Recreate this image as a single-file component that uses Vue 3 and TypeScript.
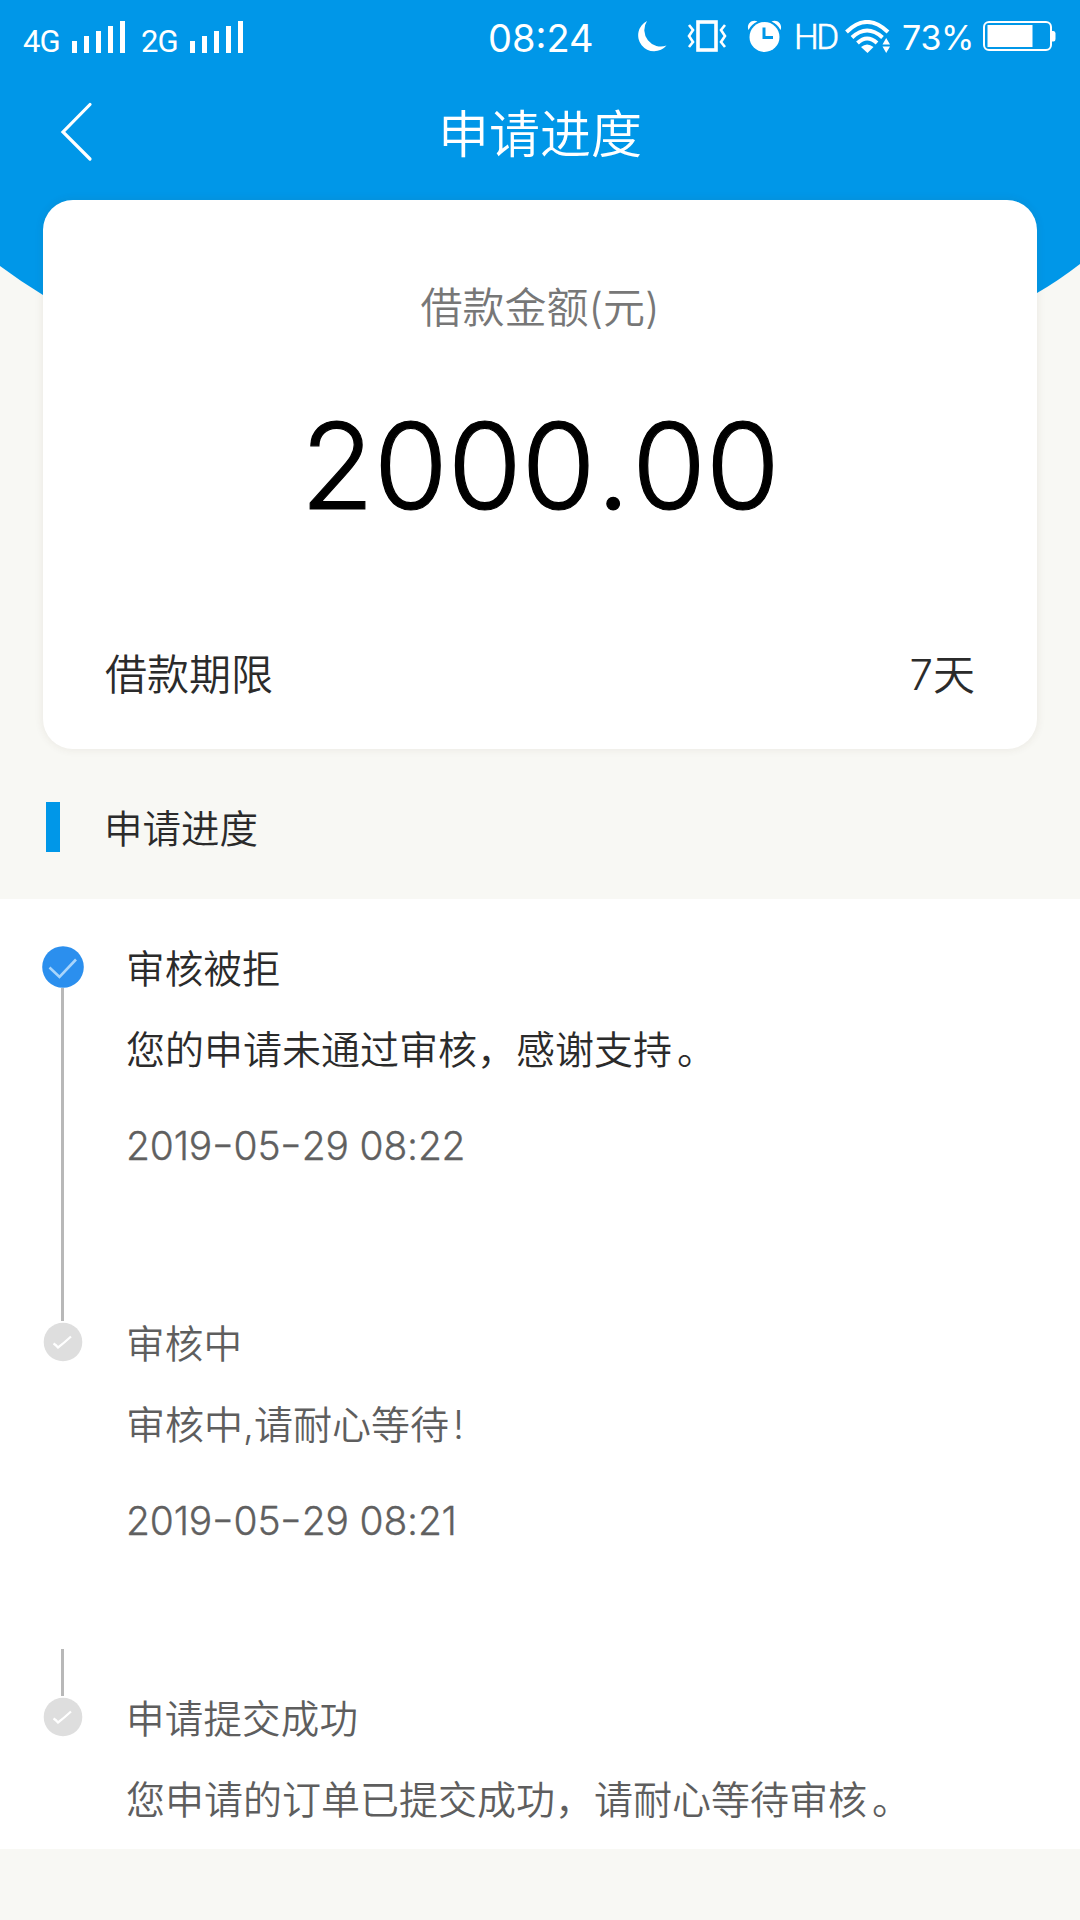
<script setup lang="ts">
interface Step {
  title: string
  text: string
  time?: string
  active: boolean
  lineAbove: boolean
  lineBelow: boolean
}

const signals: string[] = ['4G', '2G']
const bars: number[] = [12, 17, 22, 27, 32]

const steps: Step[] = [
  {
    title: '审核被拒',
    text: '您的申请未通过审核，感谢支持。',
    time: '2019-05-29 08:22',
    active: true,
    lineAbove: false,
    lineBelow: true,
  },
  {
    title: '审核中',
    text: '审核中,请耐心等待!',
    time: '2019-05-29 08:21',
    active: false,
    lineAbove: true,
    lineBelow: false,
  },
  {
    title: '申请提交成功',
    text: '您申请的订单已提交成功，请耐心等待审核。',
    active: false,
    lineAbove: true,
    lineBelow: false,
  },
]

// Splits a string so that its separators and end marks can be spaced on their own
const parts = (value: string): string[] => value.split(/(-|。|!)/).filter((p) => p !== '')
const markClass = (part: string): string =>
  part === '-' ? 'dash' : part === '。' ? 'stop' : part === '!' ? 'bang' : ''
</script>

<template>
  <div class="page">
    <svg class="backdrop" width="1080" height="400" viewBox="0 0 1080 400">
      <path d="M0 0H1080V264Q1058 281 1037 293Q540 560 43 295Q20 281 0 266Z" fill="#0097e8" />
    </svg>

    <header class="status">
      <div v-for="s in signals" :key="s" class="signal">
        <span class="net">{{ s }}</span>
        <span class="bars">
          <i v-for="h in bars" :key="h" :style="{ height: h + 'px' }"></i>
        </span>
      </div>
      <span class="clock">08:24</span>
      <svg class="moon" width="31" height="32" viewBox="0 0 31 32">
        <path d="M11 0A16 16 0 1 0 30.500 24.500A16.500 16.500 0 0 1 11 0Z" fill="#fff" />
      </svg>
      <svg class="vibrate" width="40" height="32" viewBox="0 0 40 32" fill="none" stroke="#fff">
        <rect x="11" y="2" width="18" height="28" stroke-width="3.600" />
        <path d="M2 5L6 10L2 16L6 22L2 27M38 5L34 10L38 16L34 22L38 27" stroke-width="2.600" />
      </svg>
      <svg class="alarm" width="35" height="32" viewBox="0 0 35 32">
        <circle cx="17.500" cy="17" r="15" fill="#fff" />
        <path d="M1.500 10A17.500 17.500 0 0 1 10.500 1.500C5 -1.500 -1 4 1.500 10ZM33.500 10A17.500 17.500 0 0 0 24.500 1.500C30 -1.500 36 4 33.500 10Z" fill="#fff" />
        <path d="M17 7.500V17.500H26" fill="none" stroke="#0097e8" stroke-width="3" />
      </svg>
      <span class="hd">HD</span>
      <svg class="wifi" width="46" height="33" viewBox="0 0 46 33">
        <g fill="none" stroke="#fff" stroke-width="4">
          <path d="M1.500 12Q22 -8 43 12" />
          <path d="M7 17.500Q22 3.500 37.500 17.500" />
          <path d="M12.500 23Q22 14 32 23" />
        </g>
        <path d="M16 27Q22 22 28.500 27L22.500 33Z" fill="#fff" />
        <path d="M37.500 24.500L41.200 18L45 24.500ZM37.500 26.500L41.200 33L45 26.500Z" fill="#fff" />
      </svg>
      <span class="percent">73%</span>
      <svg class="battery" width="73" height="31" viewBox="0 0 73 31">
        <rect x="1" y="1" width="67" height="28" rx="5" fill="none" stroke="#fff" stroke-width="2" />
        <rect x="4.500" y="4" width="45" height="22" fill="#fff" />
        <path d="M69 10H70.500Q72.500 10 72.500 12.500V18Q72.500 20.500 70.500 20.500H69Z" fill="#fff" />
      </svg>
    </header>

    <nav class="nav">
      <svg class="back" width="34" height="60" viewBox="0 0 34 60">
        <path d="M30 2.500L3 30L30 57" fill="none" stroke="#fff" stroke-width="3.200" stroke-linecap="round" />
      </svg>
      <h1>申请进度</h1>
    </nav>

    <section class="card">
      <p class="label">借款金额(元)</p>
      <p class="amount">2000<span class="point">.</span>00</p>
      <div class="term">
        <span>借款期限</span>
        <span>7天</span>
      </div>
    </section>

    <h2 class="heading"><span>申请进度</span></h2>

    <ol class="timeline">
      <li v-for="step in steps" :key="step.title" class="step" :class="{ active: step.active }">
        <div class="rail">
          <span class="line above" :class="{ shown: step.lineAbove }"></span>
          <svg class="dot" width="42" height="42" viewBox="0 0 42 42">
            <template v-if="step.active">
              <circle cx="21" cy="21" r="20.800" fill="#2b8fee" />
              <path d="M7.500 21.500L17.500 31L34 13.500" fill="none" stroke="#a9d5fb" stroke-width="2.600" />
            </template>
            <template v-else>
              <circle cx="21" cy="21" r="19.300" fill="#dedede" />
              <path d="M11.500 22.500Q14 24 16 26.500Q22 22 29 15.500" fill="none" stroke="#fff" stroke-width="2.200" />
            </template>
          </svg>
          <span class="line below" :class="{ shown: step.lineBelow }"></span>
        </div>
        <div class="body">
          <h3>{{ step.title }}</h3>
          <p class="text"><span v-for="(p, i) in parts(step.text)" :key="i" :class="markClass(p)">{{ p }}</span></p>
          <p v-if="step.time" class="time"><span v-for="(p, i) in parts(step.time)" :key="i" :class="markClass(p)">{{ p }}</span></p>
        </div>
      </li>
    </ol>
  </div>
</template>

<style>
body {
  margin: 0;
  background: #f8f8f4;
}
</style>

<style scoped>
.page {
  position: relative;
  width: 1080px;
  height: 1920px;
  overflow: hidden;
  background: #f8f8f4;
  color: #2b2b2b;
  font-family: Inter, "Noto Sans CJK SC", sans-serif;
  font-weight: 350;
  white-space: nowrap;
}
h1, h2, h3, p, ol {
  margin: 0;
  padding: 0;
  font-weight: inherit;
  list-style: none;
}
.backdrop {
  position: absolute;
  left: 0;
  top: 0;
}
.status {
  position: relative;
  box-sizing: border-box;
  display: flex;
  align-items: flex-start;
  height: 74px;
  padding: 20px 0 0 23px;
  color: #fff;
}
.status > * {
  flex: none;
}
.signal {
  display: flex;
  align-items: flex-end;
  height: 33px;
  width: 118px;
}
.net {
  width: 49px;
  font: 400 31px/30px Roboto, sans-serif;
  letter-spacing: -1px;
  transform: translateY(4px);
}
.bars {
  display: flex;
  align-items: flex-end;
  gap: 7px;
}
.bars i {
  width: 5px;
  background: #fff;
}
.clock {
  width: 148px;
  margin-left: 229px;
  font-size: 38px;
  line-height: 36px;
  font-weight: 400;
}
.moon {
  margin-top: 1px;
}
.vibrate {
  margin-left: 20px;
}
.alarm {
  margin-left: 20px;
}
.hd {
  width: 50px;
  margin-left: 12px;
  font: 300 35px/35px Roboto, sans-serif;
  letter-spacing: -2.500px;
  -webkit-text-stroke: 0.600px #fff;
}
.wifi {
  margin-left: 1px;
}
.percent {
  width: 81px;
  margin-left: 11px;
  font-size: 34px;
  line-height: 36px;
  font-weight: 400;
  letter-spacing: -0.300px;
}
.battery {
  margin-top: 1px;
}
.nav {
  position: relative;
  display: flex;
  align-items: center;
  height: 125px;
  color: #fff;
}
.back {
  flex: none;
  margin: -9px 0 0 60px;
}
.nav h1 {
  flex: 1;
  margin-right: 94px;
  padding-bottom: 3px;
  text-align: center;
  font-size: 51px;
  line-height: 60px;
}
.card {
  position: relative;
  box-sizing: border-box;
  width: 994px;
  height: 549px;
  margin: 0.500px 0 0 43px;
  padding: 78px 62px 0;
  border-radius: 30px;
  background: #fff;
  box-shadow: 0 0 10px rgba(80, 60, 30, 0.09);
}
.label {
  text-align: center;
  font-size: 42px;
  line-height: 60px;
  color: #777;
}
.amount {
  margin-top: 58px;
  text-align: center;
  font-size: 120px;
  line-height: 140px;
  font-weight: 300;
  letter-spacing: -0.300px;
  -webkit-text-stroke: 1.200px #000;
  color: #000;
}
.point {
  padding: 0 2px 0 1px;
}
.term {
  display: flex;
  justify-content: space-between;
  margin-top: 109px;
  font-size: 42px;
  line-height: 60px;
}
.heading {
  position: relative;
  display: flex;
  align-items: center;
  gap: 44px;
  height: 150.500px;
  padding-left: 46px;
  font-size: 38.500px;
}
.heading span {
  padding-top: 4px;
}
.heading::before {
  content: "";
  width: 14px;
  height: 50px;
  margin-top: 6px;
  background: #0097e8;
}
.timeline {
  height: 950px;
  overflow: hidden;
  background: #fff;
}
.step {
  display: flex;
  height: 375px;
  padding-left: 42px;
  color: #5e5e5e;
}
.step.active {
  color: #2b2b2b;
}
.rail {
  display: flex;
  flex-direction: column;
  align-items: flex-start;
  width: 42px;
  margin-right: 42px;
}
.line {
  width: 3px;
  margin-left: 19px;
}
.line.shown {
  background: #b8b8b8;
}
.above {
  height: 47px;
}
.below {
  flex: 1;
}
.body {
  padding-top: 40px;
  font-size: 39px;
  line-height: 60px;
}
.body h3 {
  font-size: 38.500px;
  letter-spacing: 0.200px;
}
.text {
  margin-top: 21px;
}
.time {
  margin-top: 36px;
  color: #606060;
  letter-spacing: -0.200px;
  -webkit-text-stroke: 0.300px #606060;
}
.dash {
  display: inline-block;
  margin: 0 2px;
  transform: scaleX(1.250);
  font-feature-settings: "case";
}
.stop {
  margin-left: 5px;
}
.bang {
  margin-left: 4px;
}
</style>
